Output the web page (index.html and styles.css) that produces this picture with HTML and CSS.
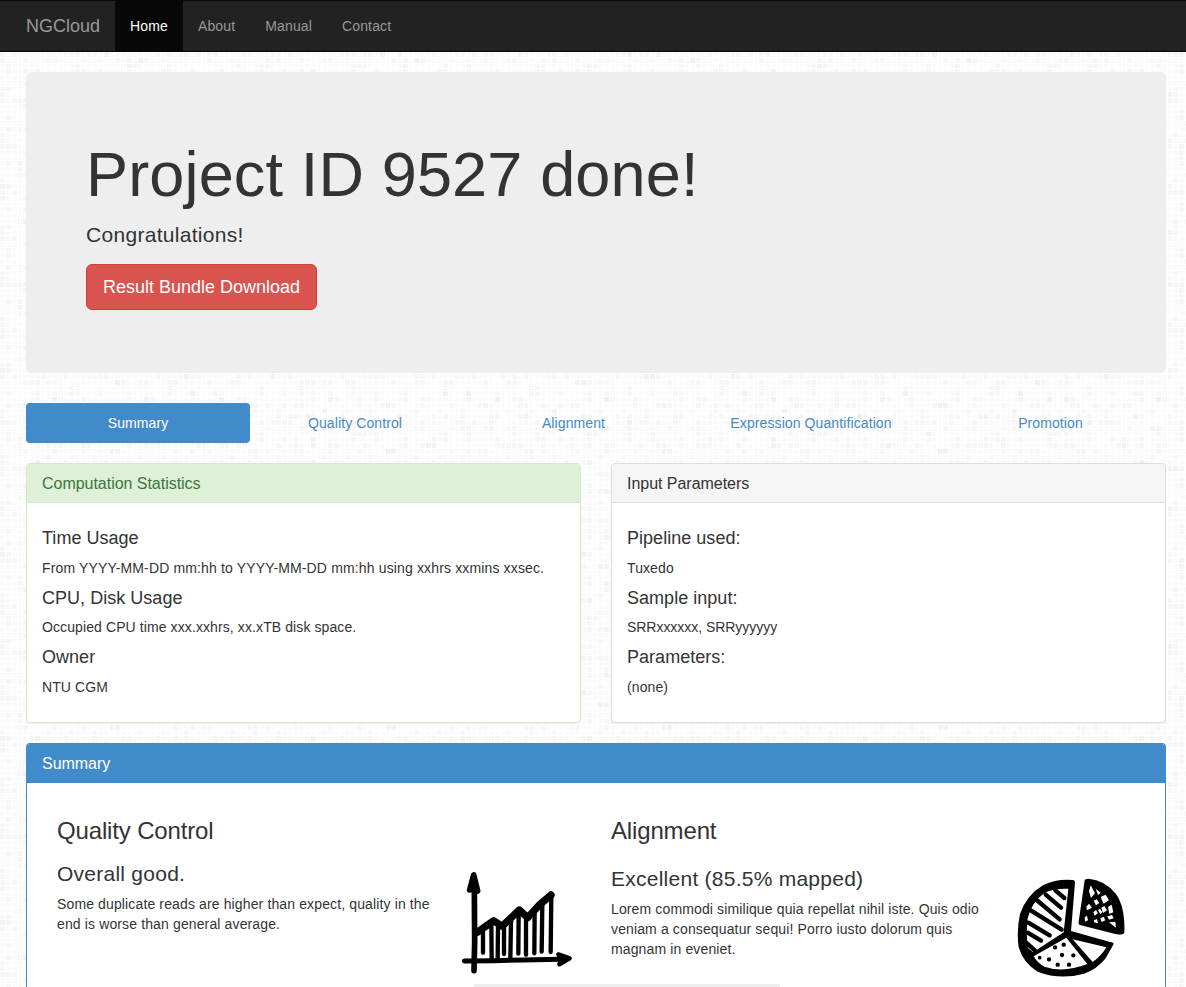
FILE: index.html
```html
<!DOCTYPE html>
<html lang="en">
<head>
<meta charset="utf-8">
<title>NGCloud</title>
<link rel="stylesheet" href="styles.css">
</head>
<body>
<nav class="navbar">
  <a class="brand">NGCloud</a>
  <a class="nav-link active">Home</a>
  <a class="nav-link">About</a>
  <a class="nav-link">Manual</a>
  <a class="nav-link">Contact</a>
</nav>
<main class="container">
  <section class="jumbotron">
    <h1>Project ID 9527 done!</h1>
    <p>Congratulations!</p>
    <a class="btn">Result Bundle Download</a>
  </section>
  <nav class="pills">
    <a class="pill active">Summary</a>
    <a class="pill">Quality Control</a>
    <a class="pill">Alignment</a>
    <a class="pill">Expression Quantification</a>
    <a class="pill">Promotion</a>
  </nav>
  <div class="columns">
    <section class="panel success">
      <h3 class="panel-title">Computation Statistics</h3>
      <div class="panel-body">
        <h4>Time Usage</h4>
        <p class="period">From YYYY-MM-DD mm:hh to YYYY-MM-DD mm:hh using xxhrs xxmins xxsec.</p>
        <h4>CPU, Disk Usage</h4>
        <p>Occupied CPU time xxx.xxhrs, xx.xTB disk space.</p>
        <h4>Owner</h4>
        <p>NTU CGM</p>
      </div>
    </section>
    <section class="panel">
      <h3 class="panel-title">Input Parameters</h3>
      <div class="panel-body">
        <h4>Pipeline used:</h4>
        <p>Tuxedo</p>
        <h4>Sample input:</h4>
        <p class="samples">SRRxxxxxx, SRRyyyyyy</p>
        <h4>Parameters:</h4>
        <p>(none)</p>
      </div>
    </section>
  </div>
  <section class="panel primary">
    <h3 class="panel-title">Summary</h3>
    <div class="panel-body">
      <div class="results">
        <article class="result">
          <h3>Quality Control</h3>
          <div class="media">
            <div class="media-text">
              <h4>Overall good.</h4>
              <p>Some duplicate reads are higher than expect, quality in the end is worse than general average.</p>
            </div>
            <svg class="icon" viewBox="0 0 405 345" fill="none" stroke="#000" stroke-linecap="round" stroke-linejoin="round">
              <path d="M73 85L74 240L72 326" stroke-width="17"/>
              <path d="M71 39L59 84Q71 79 83 87Z" fill="#000" stroke-width="17"/>
              <path d="M43 297L130 296L220 294L330 292" stroke-width="15"/>
              <path d="M325 277L359 289L328 307L334 292Z" fill="#000" stroke-width="13"/>
              <path d="M82 211L131 176L156 193L208 144L233 167L270 127L303 99" stroke-width="22"/>
              <path d="M99 210V272M124 188L125 290M144 195L143 290M162 195V276M183 175L181 290M206 155L205 275M228 165V278M254 145L253 274M277 125L275 269M304 98L302 270" stroke-width="13"/>
            </svg>
          </div>
        </article>
        <article class="result alignment">
          <h3>Alignment</h3>
          <div class="media">
            <div class="media-text">
              <h4>Excellent (85.5% mapped)</h4>
              <p>Lorem commodi similique quia repellat nihil iste. Quis odio veniam a consequatur sequi! Porro iusto dolorum quis magnam in eveniet.</p>
            </div>
            <svg class="icon" viewBox="0 0 405 345">
              <path d="M204 45Q158 40 115 60Q64 90 45 147Q34 198 41 247Q55 295 98 320Q165 346 237 326Q275 314 302 280L326 237Q326 232 315 231L198 198L210 53Q210 46 204 45Z"/>
              <g fill="#fff">
                <path d="M190 71Q140 70 115 86Q79 114 68 160Q62 210 70 250L84 262L176 202Z"/>
                <path d="M184 218L247 297Q175 325 118 305Q95 292 86 274Z"/>
                <path d="M203 223L304 247Q290 272 263 291Z"/>
              </g>
              <g fill="none" stroke="#000" stroke-width="13" stroke-linecap="round">
                <path d="M151 76L178 99M122 89L168 128M95 105L164 163M77 136L170 194M70 173L134 211M68 203L108 227M66 235L90 257"/>
                <path d="M150 247h.1M176 239h.1M171 270h.1M205 271h.1M132 283h.1M158 299h.1M192 299h.1"/>
                <path d="M104 278h.1" stroke-width="11"/>
              </g>
              <path d="M239 46Q240 41 250 41Q300 45 333 87Q361 127 358 203Q357 210 334 208L225 180Q219 178 221 170Z"/>
              <path fill="#fff" transform="translate(195 15)" d="M62 46L75 70L63 84L57 64ZM77 56L92 68L84 75ZM92 81L107 74L117 91L101 101ZM71 92L80 88L88 99L78 106ZM49 110L57 101L66 113L51 121ZM94 113L103 108L111 121L99 129ZM114 111L125 104L130 127L118 132ZM70 127L78 120L84 130L74 137ZM84 120L90 116L97 126L91 133ZM44 142L51 137L54 151L45 155ZM72 151L81 147L84 160L72 157ZM91 145L101 140L106 151L95 156ZM112 139L126 135L131 145L117 149ZM117 157L136 155L138 173Z"/>
            </svg>
          </div>
        </article>
      </div>
      <div class="divider"></div>
    </div>
  </section>
</main>
</body>
</html>
```

FILE: styles.css
```css
* { box-sizing: border-box; }
body {
  margin: 0;
  height: 987px;
  font: 14px/20px "Liberation Sans", Arial, sans-serif;
  letter-spacing: .1px;
  color: #333;
  background-color: #fbfbfb;
  background-image:
    url("data:image/svg+xml,%3Csvg xmlns='http://www.w3.org/2000/svg' width='46' height='46'%3E%3Cpath d='M0 5.5H46M0 11.5H46M0 17.5H46M0 22.5H46M0 28.5H46M0 34.5H46M0 40.5H46M0 45.5H46M5.5 0V46M11.5 0V46M17.5 0V46M22.5 0V46M28.5 0V46M34.5 0V46M40.5 0V46M45.5 0V46' stroke='white'/%3E%3C/svg%3E"),
    url("data:image/svg+xml,%3Csvg xmlns='http://www.w3.org/2000/svg' width='92' height='46'%3E%3Cpath d='M0 0h6v12h-6zM12 6h6v6h-6zM29 0h12v6h-12zM23 12h6v6h-6zM46 12h12v6h-12zM64 0h5v12h-5zM75 18h6v11h-6zM86 6h6v6h-6zM6 23h6v6h-6zM35 23h6v12h-6zM52 29h12v6h-12zM18 35h11v6h-11zM81 35h5v6h-5zM69 41h6v5h-6zM0 41h6v5h-6zM46 41h6v5h-6z' fill='black' opacity='.014'/%3E%3C/svg%3E"),
    url("data:image/svg+xml,%3Csvg xmlns='http://www.w3.org/2000/svg' width='138' height='138'%3E%3Cpath d='M6 6h6v6h-6zM29 0h6v6h-6zM46 12h12v6h-12zM75 6h6v12h-6zM98 18h6v5h-6zM121 6h6v6h-6zM18 23h5v12h-5zM52 35h6v6h-6zM86 29h6v6h-6zM110 35h11v6h-11zM35 46h6v6h-6zM69 52h12v6h-12zM0 58h6v6h-6zM104 52h6v6h-6zM127 58h5v11h-5zM23 69h6v6h-6zM46 75h12v6h-12zM87 75h5v6h-5zM6 87h6v5h-6zM64 92h11v6h-11zM98 98h6v6h-6zM121 92h6v6h-6zM29 104h12v6h-12zM52 115h6v12h-6zM81 121h6v6h-6zM6 127h6v5h-6zM104 127h11v5h-11z' fill='black' opacity='.02'/%3E%3C/svg%3E"),
    url("data:image/svg+xml,%3Csvg xmlns='http://www.w3.org/2000/svg' width='230' height='184'%3E%3Cpath d='M0 0h12v6h-12zM40 6h6v6h-6zM69 17h6v12h-6zM115 12h12v6h-12zM144 29h6v6h-6zM184 6h12v6h-12zM213 23h6v6h-6zM23 35h6v6h-6zM58 46h12v6h-12zM92 40h6v6h-6zM167 46h6v12h-6zM6 63h6v6h-6zM46 75h6v6h-6zM81 69h6v12h-6zM127 63h12v6h-12zM196 75h12v6h-12zM17 98h12v6h-12zM63 104h6v6h-6zM104 92h6v6h-6zM150 104h6v6h-6zM86 115h6v6h-6zM184 121h6v6h-6zM35 138h12v6h-12zM115 144h6v12h-6zM150 161h12v6h-12zM213 150h6v6h-6zM75 167h6v6h-6z' fill='black' opacity='.02'/%3E%3C/svg%3E");
}
h1, h3, h4, p { margin: 0; font-weight: 400; }
h1, h3, h4 { line-height: 1.1; }
.navbar {
  display: flex;
  height: 52px;
  padding-left: 11px;
  background: #222;
  border: solid #080808;
  border-width: 1px 0;
  color: #999;
}
.brand { padding: 15px; font-size: 18px; letter-spacing: 0; }
.nav-link { padding: 15px; letter-spacing: .14px; }
.nav-link.active { color: #fff; background: #080808; }
.container { width: 1140px; margin: 20px 0 0 26px; }
.jumbotron {
  height: 301px;
  padding: 68px 60px 48px;
  border-radius: 6px;
  background: #eee;
}
.jumbotron h1 { margin-bottom: 10px; font-size: 63px; letter-spacing: .15px; }
.jumbotron p { padding-top: 1px; margin-bottom: 14px; font-size: 21px; line-height: 30px; letter-spacing: .3px; }
.btn {
  display: inline-block;
  padding: 10px 16px;
  border: 1px solid #d43f3a;
  border-radius: 6px;
  background: #d9534f;
  color: #fff;
  font-size: 18px;
  line-height: 24px;
  letter-spacing: 0;
}
.pills {
  display: grid;
  grid-template-columns: 224px 210px 227px 248px 231px;
  margin: 30px 0 20px;
  text-align: center;
}
.pill { padding: 10px 0; border-radius: 4px; color: #428bca; }
.pill.active { background: #428bca; color: #fff; }
.columns { display: grid; grid-template-columns: 1fr 1fr; gap: 30px; }
.panel {
  height: 260px;
  border: 1px solid #ddd;
  border-radius: 4px;
  background: #fff;
  box-shadow: 0 1px 1px rgba(0, 0, 0, .05);
}
.panel-title {
  height: 38.6px;
  padding: 11px 15px 9px;
  border-bottom: 1px solid #ddd;
  border-radius: 3px 3px 0 0;
  background: #f5f5f5;
  font-size: 16px;
  letter-spacing: -.03px;
}
.panel-body { padding: 25.2px 15px; }
.panel-body h4 { padding-top: 1px; margin-bottom: 9px; font-size: 18px; letter-spacing: .03px; }
.panel-body p { margin-bottom: 10px; }
.panel-body .period { letter-spacing: .145px; }
.panel-body .samples { letter-spacing: -.04px; }
.success { border-color: #d6e9c6; }
.success .panel-title { border-color: #d6e9c6; background: #dff0d8; color: #3c763d; }
.primary {
  height: 244px;
  margin-top: 20px;
  border-color: #428bca;
  border-bottom: 0;
  border-radius: 4px 4px 0 0;
  box-shadow: none;
}
.primary .panel-title { height: 39px; border-color: #428bca; background: #428bca; color: #fff; }
.primary .panel-body { padding: 35px 15px 0; }
.results { display: grid; grid-template-columns: 554px 554px; height: 166px; }
.result { padding-left: 15px; }
.result h3 { font-size: 24px; letter-spacing: -.15px; }
.media { display: flex; padding-top: 18px; }
.media-text { width: 393px; padding-right: 8px; }
.media-text h4 { padding-top: 0; margin-bottom: 9px; font-size: 21px; letter-spacing: .25px; }
.media-text p { letter-spacing: .13px; }
.alignment .media { padding-top: 21px; }
.alignment .media-text { width: 394px; padding-top: 2px; }
.icon { flex: none; width: 135px; height: 115px; }
.divider { width: 306px; height: 3px; margin-left: 432px; background: #eee; }
```
